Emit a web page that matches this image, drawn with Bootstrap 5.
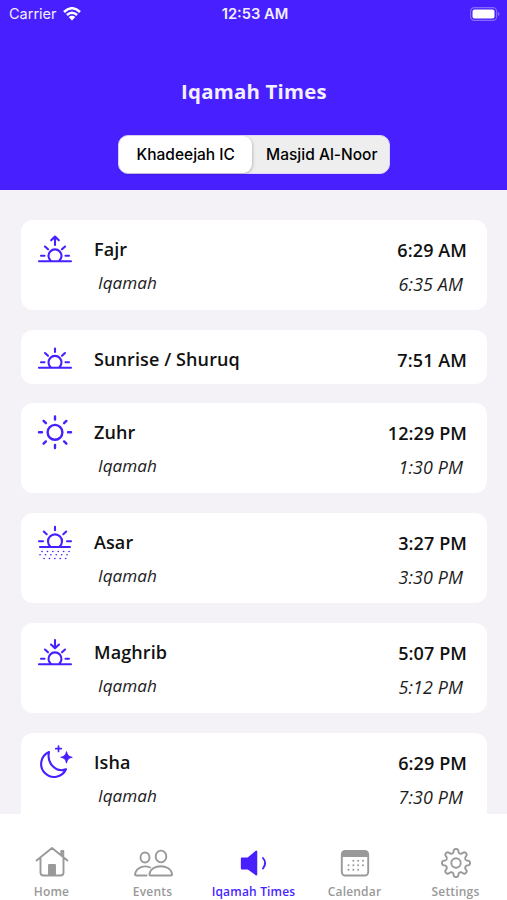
<!DOCTYPE html>
<html lang="en">
<head>
<meta charset="utf-8">
<meta name="viewport" content="width=device-width, initial-scale=1">
<title>Iqamah Times</title>
<link href="https://cdn.jsdelivr.net/npm/bootstrap@5.3.0/dist/css/bootstrap.min.css" rel="stylesheet">
<style>
:root{--brand:#481fff}
body{font-family:"Open Sans",sans-serif;background:#f4f2f6;height:900px;overflow:hidden;color:#111}
svg{display:block;flex:none}
.app-head{background:var(--brand);height:190px;color:#f3efff}
.status{font-family:Inter,sans-serif;height:28px;font-size:14.5px;line-height:28px;padding:0 7px 0 9px}
.status>div{flex:1 1 0}
.status .wifi{margin-left:6px}
.clock{font-weight:600;font-size:14.7px;padding-left:1px}
.page-title{font-size:20.4px;font-weight:700;line-height:28px;margin:49px 0 0;letter-spacing:.22px;padding-left:1px}
.segments{width:272px;height:39px;margin:30px auto 0;background:#eee;border-radius:10px;border:1px solid #dcd6fb;font-family:Inter,sans-serif;font-size:15.5px;color:#111;position:relative;left:.5px}
.segments button{border:0;background:none;padding:0;height:37px;width:138px;line-height:37px;font-weight:450;padding-left:3px}
.segments .chosen{background:#fff;border-radius:9px;width:133px;padding-left:1px;font-weight:500;box-shadow:1px 1px 3px rgba(0,0,0,.2)}
.times{padding:30px 20px 0 21px;gap:20px;height:624px;overflow:hidden}
.prayer{border:0;border-radius:12px;height:90px;flex:none;padding:12px 20px 0 16px}
.prayer.single{height:54px;margin-bottom:-1px}
.prayer svg{width:36px;height:36px;stroke:var(--brand);stroke-width:2.1;fill:none;stroke-linecap:round;stroke-linejoin:round}
.label-col{margin-left:21px}
.name{font-size:18px;font-weight:600;line-height:34px;color:#111}
.iq{font-size:17.9px;font-style:italic;line-height:34px;color:#1c1c1c;letter-spacing:.1px}
.label-col .name{letter-spacing:.1px}
.label-col .iq{padding-left:4px;font-size:17.2px;letter-spacing:0}
.time-col .iq{padding-right:4px}
.time-col{padding-top:.6px;letter-spacing:.1px}
.tabs{height:86px;background:#fff;padding:0 1px}
.tabs a{flex:1 1 0;color:#999;text-decoration:none;font-size:12px;font-weight:600;letter-spacing:.18px;padding-top:31px;white-space:nowrap}
.tabs svg{width:40px;height:36px;stroke:currentColor;fill:none;stroke-width:1.9;stroke-linejoin:round;stroke-linecap:round}
.tabs span{line-height:17px;margin-top:1.6px}
.tabs a.current{color:var(--brand)}
</style>
</head>
<body class="d-flex flex-column">
<svg width="0" height="0" class="position-absolute">
<defs>
<g id="rise"><path d="M2 29.300H34M14 29A6.500 6.500 0 1 1 22 29M4 23.700H7.500M28.500 23.700H32M8 14.500L11 17.300M28 14.500L25 17.300"/></g>
</defs>
</svg>
<header class="app-head flex-shrink-0">
<div class="status d-flex align-items-center">
<div class="d-flex align-items-center"><span>Carrier</span>
<svg class="wifi" width="18" height="14" viewBox="0 0 18 14" fill="none" stroke="#fff" stroke-width="2.500"><path d="M1 5Q9-2.500 17 5M3.900 8Q9 3.400 14.100 8"/><path d="M5.700 10Q9 7.300 12.300 10L9 13.500Z" fill="#fff" stroke="none"/></svg></div>
<div class="clock text-center">12:53 AM</div>
<div class="d-flex justify-content-end"><svg width="30" height="14" viewBox="0 0 30 14"><rect x=".6" y=".6" width="26" height="12.800" rx="3.800" fill="none" stroke="#8669ff" stroke-width="1.200"/><rect x="2.500" y="2.500" width="22" height="9" rx="2" fill="#fff"/><path d="M28 5Q31 7 28 9Z" fill="#8f74ff"/></svg></div>
</div>
<h1 class="page-title text-center">Iqamah Times</h1>
<div class="segments d-flex"><button class="chosen">Khadeejah IC</button><button>Masjid Al-Noor</button></div>
</header>
<main class="times d-flex flex-column flex-shrink-0">
<section class="card prayer flex-row">
<svg viewBox="0 0 36 36"><use href="#rise"/><path d="M18 13V5M14.200 8.300L18 4.500L21.800 8.300"/></svg>
<div class="label-col"><div class="name">Fajr</div><div class="iq">Iqamah</div></div>
<div class="time-col text-end ms-auto"><div class="name">6:29 AM</div><div class="iq">6:35 AM</div></div>
</section>
<section class="card prayer single flex-row">
<svg viewBox="0 0 36 36"><g transform="translate(0 -3.500)"><use href="#rise"/><path d="M18 10V13.500"/></g></svg>
<div class="label-col"><div class="name">Sunrise / Shuruq</div></div>
<div class="time-col text-end ms-auto"><div class="name">7:51 AM</div></div>
</section>
<section class="card prayer flex-row">
<svg viewBox="0 0 36 36"><g stroke-width="2.400"><circle cx="18" cy="17.300" r="7.400"/><path d="M18 1.500V4.500M18 30V33M2 17.300H5M31 17.300H34M6.600 5.900L8.900 8.200M27.100 26.400L29.400 28.700M29.400 5.900L27.100 8.200M8.900 26.400L6.600 28.700"/></g></svg>
<div class="label-col"><div class="name">Zuhr</div><div class="iq">Iqamah</div></div>
<div class="time-col text-end ms-auto"><div class="name">12:29 PM</div><div class="iq">1:30 PM</div></div>
</section>
<section class="card prayer flex-row">
<svg viewBox="0 0 36 36"><path d="M3 22H33M13.500 21.700A7 7 0 1 1 22.500 21.700M2 16.300H6M30 16.300H34M18 1.800V5.300M6.800 6.500L9.700 9.200M29.200 6.500L26.300 9.200"/><path d="M5 26.500H34M3 29.700H34M7 33.500H32" stroke-width="1.600" stroke-dasharray=".1 5.300"/></svg>
<div class="label-col"><div class="name">Asar</div><div class="iq">Iqamah</div></div>
<div class="time-col text-end ms-auto"><div class="name">3:27 PM</div><div class="iq">3:30 PM</div></div>
</section>
<section class="card prayer flex-row">
<svg viewBox="0 0 36 36"><use href="#rise"/><path d="M18 5V13M14 9.500L18 13.300L22 9.500"/></svg>
<div class="label-col"><div class="name">Maghrib</div><div class="iq">Iqamah</div></div>
<div class="time-col text-end ms-auto"><div class="name">5:07 PM</div><div class="iq">5:12 PM</div></div>
</section>
<section class="card prayer flex-row">
<svg viewBox="0 0 36 36"><path d="M12 7A13 13 0 1 0 29 24.300C19 28 9.500 18.500 12 7Z"/><path d="M29.500 6.800Q30.200 11.600 35 12.300Q30.200 13 29.500 17.800Q28.800 13 24 12.300Q28.800 11.600 29.500 6.800Z" fill="#481fff" stroke-width="1.100"/><path d="M21.500 1V6.400M18.800 3.700H24.200" stroke-width="1.700"/></svg>
<div class="label-col"><div class="name">Isha</div><div class="iq">Iqamah</div></div>
<div class="time-col text-end ms-auto"><div class="name">6:29 PM</div><div class="iq">7:30 PM</div></div>
</section>
</main>
<nav class="tabs d-flex flex-shrink-0">
<a href="#" class="d-flex flex-column align-items-center"><svg viewBox="0 0 40 36"><path d="M4.500 15.500L20 3L35.500 15.500M8.500 13V27.500Q8.500 30.500 11.500 30.500H28.500Q31.500 30.500 31.500 27.500V13M29.300 9.500V6H31.300V12"/><path d="M17 20H23V30H17Z" fill="currentColor"/></svg><span>Home</span></a>
<a href="#" class="d-flex flex-column align-items-center"><svg viewBox="0 0 40 36"><ellipse cx="12" cy="12.500" rx="4.500" ry="5"/><ellipse cx="28" cy="11.500" rx="5.300" ry="5.900"/><path d="M17.500 30.500H38Q39.300 30.500 38.900 28.500C37 18.800 18.500 18.800 16.600 28.500Q16.200 30.500 17.500 30.500ZM13.500 30.500H3Q1.700 30.500 2.200 28.500C3.800 22 11.500 20 17 22.500"/></svg><span>Events</span></a>
<a href="#" class="current d-flex flex-column align-items-center"><svg viewBox="0 0 40 36"><path d="M7.800 13.500H14L22.300 6.500V29.500L14 23.500H7.800Z" fill="currentColor"/><path d="M29 13Q33.300 18 29 23.500"/></svg><span>Iqamah Times</span></a>
<a href="#" class="d-flex flex-column align-items-center"><svg viewBox="0 0 40 36"><rect x="6.800" y="6" width="26.400" height="24.500" rx="3.500"/><path d="M8 7H32L33 11H7Z" fill="currentColor"/><path d="M18.300 15.700H28.500M13.500 20.200H28.500M13.500 24.800H23.800" stroke-dasharray=".1 4.700"/></svg><span>Calendar</span></a>
<a href="#" class="d-flex flex-column align-items-center"><svg viewBox="0 0 40 36"><path id="gear" d=""/><circle cx="20" cy="18" r="4.700"/></svg><span>Settings</span></a>
</nav>
<script>
// Outline of the eight-toothed settings gear, one point every two degrees.
(function(){
  var d='';
  for(var a=0;a<360;a+=2){
    var t=a*Math.PI/180, w=Math.tanh(1.8*Math.cos(8*t))/Math.tanh(1.8);
    var r=12.1+1.9*w;
    d+=(a?'L':'M')+(20+r*Math.sin(t)).toFixed(2)+' '+(18-r*Math.cos(t)).toFixed(2);
  }
  document.getElementById('gear').setAttribute('d',d+'Z');
})();
</script>
<script src="https://cdn.jsdelivr.net/npm/bootstrap@5.3.0/dist/js/bootstrap.bundle.min.js"></script>
</body>
</html>
